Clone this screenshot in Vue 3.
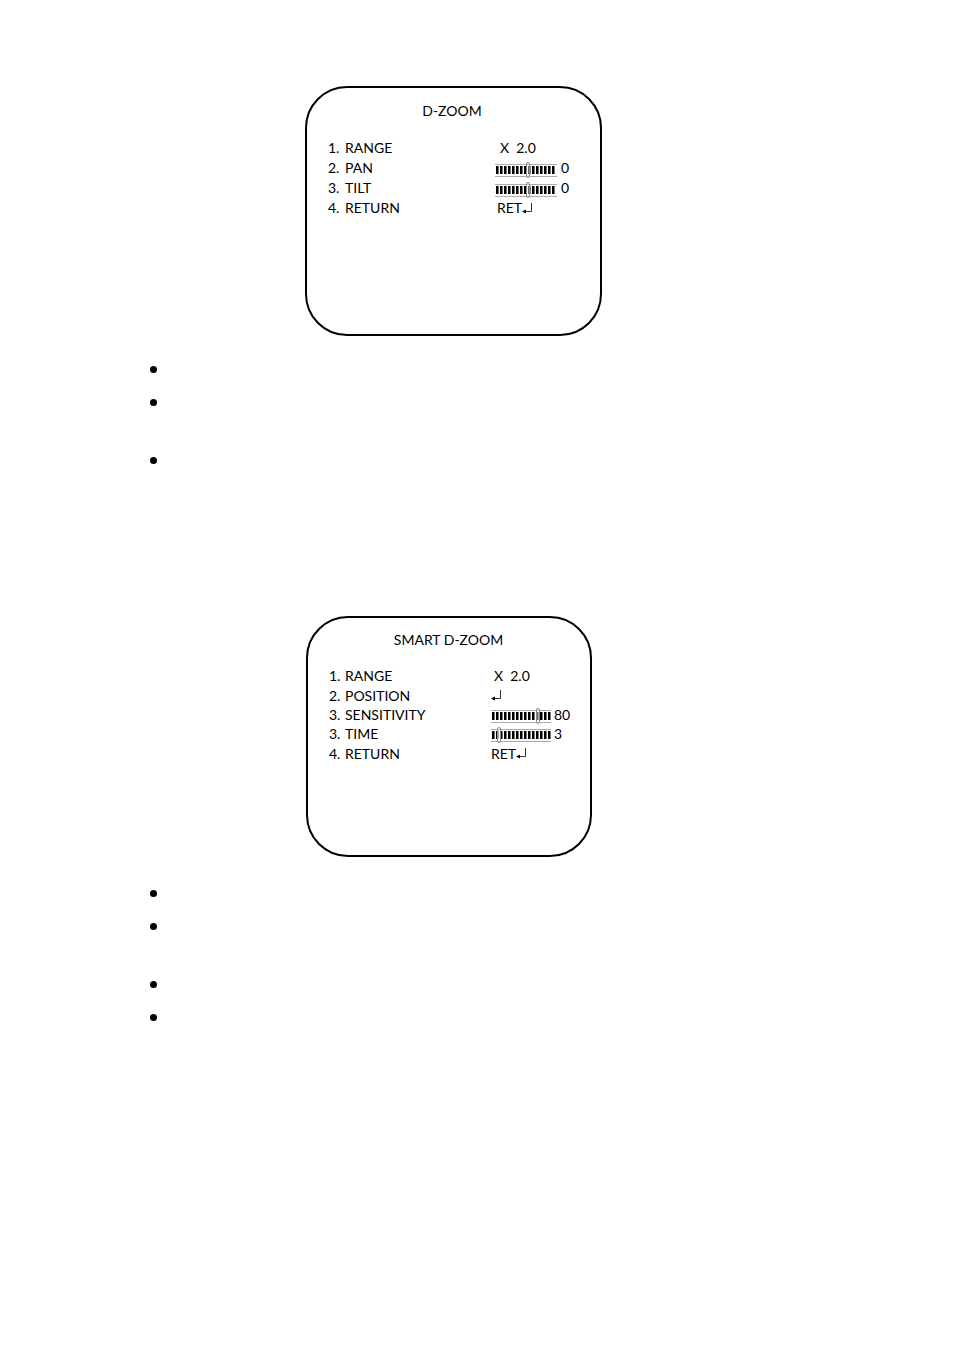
<script setup>
const screens = [
  {
    id: 'dzoom',
    title: 'D-ZOOM',
    rows: [
      { no: '1.', label: 'RANGE', kind: 'text', value: 'X\u00a0 2.0' },
      { no: '2.', label: 'PAN', kind: 'slider', min: -8, max: 7, value: 0 },
      { no: '3.', label: 'TILT', kind: 'slider', min: -8, max: 7, value: 0 },
      { no: '4.', label: 'RETURN', kind: 'enter', value: 'RET' },
    ],
    notes: ['short', 'tall', 'short'],
  },
  {
    id: 'smart',
    title: 'SMART D-ZOOM',
    rows: [
      { no: '1.', label: 'RANGE', kind: 'text', value: 'X\u00a0 2.0' },
      { no: '2.', label: 'POSITION', kind: 'enter', value: '' },
      { no: '3.', label: 'SENSITIVITY', kind: 'slider', min: 0, max: 100, value: 80 },
      { no: '3.', label: 'TIME', kind: 'slider', min: 0, max: 30, value: 3 },
      { no: '4.', label: 'RETURN', kind: 'enter', value: 'RET' },
    ],
    notes: ['short', 'tall', 'short', 'short'],
  },
]
</script>

<template>
  <main class="page">
    <section v-for="s in screens" :key="s.id" :class="['block', s.id]">
      <div class="screen">
        <h2>{{ s.title }}</h2>
        <div class="rows">
          <div v-for="(r, i) in s.rows" :key="i" class="row">
            <span class="no">{{ r.no }}</span>
            <label v-if="r.kind === 'slider'" class="label" :for="s.id + i">{{ r.label }}</label>
            <span v-else :id="s.id + i" class="label">{{ r.label }}</span>
            <span v-if="r.kind === 'text'" class="value text">{{ r.value }}</span>
            <span v-else-if="r.kind === 'slider'" class="value">
              <input :id="s.id + i" type="range" :min="r.min" :max="r.max" :value="r.value" />
              <output :for="s.id + i">{{ r.value }}</output>
            </span>
            <button v-else type="button" :class="['value', { ret: r.value }]" :aria-labelledby="s.id + i">
              {{ r.value }}<svg width="11" height="12" viewBox="0 0 11 12" aria-hidden="true">
                <path d="M9.5 1V9.5H2" fill="none" stroke="#333" />
                <path d="M0 9.5L4 7.5V11.5Z" fill="#000" />
              </svg>
            </button>
          </div>
        </div>
      </div>
      <ul>
        <li v-for="(n, i) in s.notes" :key="i" :class="n"></li>
      </ul>
    </section>
  </main>
</template>

<style>
body {
  background: #fff;
}
</style>

<style scoped>
.page {
  box-sizing: border-box;
  padding: 86px 0 80px 150px;
  color: #000;
  font: 14px/20px Lato, "Liberation Sans", sans-serif;
}
.screen {
  box-sizing: border-box;
  display: flex;
  flex-direction: column;
  max-width: 297px;
  min-height: 250px;
  margin-left: 155px;
  padding: 13px 24px 40px 21px;
  border: 2px solid #000;
  border-radius: 42px;
}
.smart .screen {
  max-width: 286px;
  min-height: 241px;
  margin-left: 156px;
  padding-top: 12px;
  padding-right: 22px;
}
h2 {
  margin: 0 0 17px;
  font: inherit;
  text-align: center;
}
.smart h2 {
  margin-bottom: 16px;
}
.rows {
  display: grid;
  grid-auto-rows: 1fr;
  min-height: 80px;
}
.smart .rows {
  min-height: 97px;
  line-height: 19px;
}
.row {
  display: grid;
  grid-template-columns: 17px 150px 1fr;
  align-items: center;
}
.smart .row {
  grid-template-columns: 16px 146px 1fr;
}
.value {
  display: flex;
  align-items: center;
  white-space: nowrap;
}
.text {
  padding-left: 5px;
}
.smart .text {
  padding-left: 3px;
}
button {
  margin: 0;
  padding: 0;
  border: 0;
  background: none;
  color: inherit;
  font: inherit;
}
.dzoom .ret {
  padding-left: 2px;
}
svg {
  flex: none;
}
input {
  appearance: none;
  flex: none;
  width: 62px;
  height: 16px;
  margin: 3px 4px 0 0;
  background:
    linear-gradient(#aaa, #aaa) 0 2px / 100% 1px no-repeat,
    linear-gradient(#aaa, #aaa) 0 14px / 100% 1px no-repeat,
    repeating-linear-gradient(90deg, #000 0 2px, #777 2px 3px, #fff 3px 4px) 1px 4px / 60px 8px no-repeat;
}
.smart input {
  width: 60px;
  margin-right: 3px;
}
input::-webkit-slider-thumb {
  appearance: none;
  box-sizing: border-box;
  width: 4px;
  height: 16px;
  border: 1px solid #888;
  border-radius: 2px;
  background: rgba(255, 255, 255, 0.4);
}
ul {
  margin: 0;
  padding: 30px 0 0;
  list-style: none;
}
li {
  height: 33px;
}
li.tall {
  height: 58px;
}
li::before {
  content: "";
  display: block;
  width: 7px;
  height: 7px;
  border-radius: 50%;
  background: #000;
}
.dzoom ul {
  padding-bottom: 126px;
}
.smart ul {
  padding-top: 33px;
}
</style>
